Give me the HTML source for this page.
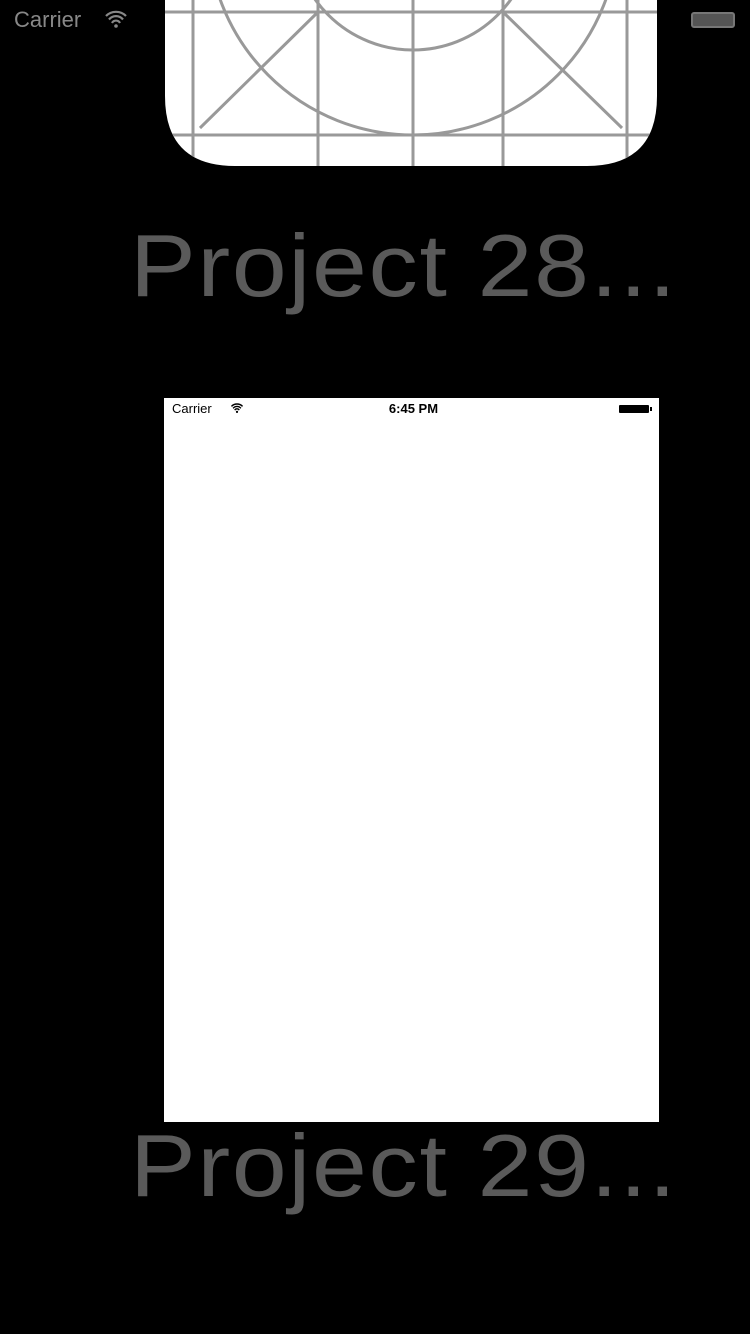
<!DOCTYPE html>
<html><head><style>
body{margin:0;width:750px;height:1334px;background:#000;position:relative;overflow:hidden;font-family:"Liberation Sans",sans-serif}
.t{position:absolute;left:130px;color:#5a5a5a;font-size:88px;letter-spacing:1.5px;line-height:1;transform:scaleX(1.12);transform-origin:0 0;white-space:nowrap}
</style></head><body>
<div style="position:absolute;left:14px;top:7px;color:#888;font-size:22px">Carrier</div>
<svg style="position:absolute;left:104px;top:10px" width="24" height="18" viewBox="0 0 24 18"><path d="M2 6a14 14 0 0 1 20 0M5 9.5a9 9 0 0 1 14 0M8 13a4.5 4.5 0 0 1 8 0" stroke="#888" stroke-width="2.2" fill="none"/><circle cx="12" cy="16" r="1.8" fill="#888"/></svg>
<div style="position:absolute;left:691px;top:12px;width:44px;height:16px;border:2px solid #777;border-radius:3px;box-sizing:border-box;background:#555"></div>
<svg style="position:absolute;left:0;top:0" width="750" height="180">
<defs><clipPath id="c"><path d="M165 -100H657V96Q657 166 587 166H235Q165 166 165 96Z"/></clipPath></defs>
<path d="M165 -100H657V96Q657 166 587 166H235Q165 166 165 96Z" fill="#fff"/>
<g clip-path="url(#c)" stroke="#999" stroke-width="3" fill="none">
<line x1="193" y1="-10" x2="193" y2="170"/><line x1="318" y1="-10" x2="318" y2="170"/><line x1="413" y1="-10" x2="413" y2="170"/><line x1="503" y1="-10" x2="503" y2="170"/><line x1="627" y1="-10" x2="627" y2="170"/>
<line x1="160" y1="12" x2="660" y2="12"/><line x1="160" y1="135" x2="660" y2="135"/>
<circle cx="413" cy="-70" r="205"/><circle cx="413" cy="-70" r="120"/>
<line x1="318" y1="12" x2="200" y2="128"/><line x1="503" y1="12" x2="622" y2="128"/>
</g></svg>
<div class="t" style="top:222px">Project 28...</div>
<div style="position:absolute;left:164px;top:398px;width:495px;height:724px;background:#fff">
<div style="position:absolute;left:8px;top:3px;font-size:13px;color:#000">Carrier</div>
<svg style="position:absolute;left:66px;top:5px" width="14" height="10" viewBox="0 0 24 18"><path d="M2 6a14 14 0 0 1 20 0M5 9.5a9 9 0 0 1 14 0M8 13a4.5 4.5 0 0 1 8 0" stroke="#000" stroke-width="2.5" fill="none"/><circle cx="12" cy="16" r="2" fill="#000"/></svg>
<div style="position:absolute;left:2px;width:495px;text-align:center;top:3px;font-size:13px;font-weight:bold">6:45 PM</div>
<div style="position:absolute;left:455px;top:7px;width:30px;height:8px;background:#000;border-radius:1px"></div>
<div style="position:absolute;left:486px;top:9px;width:2px;height:4px;background:#000"></div>
</div>
<div class="t" style="top:1122px">Project 29...</div>
</body></html>
